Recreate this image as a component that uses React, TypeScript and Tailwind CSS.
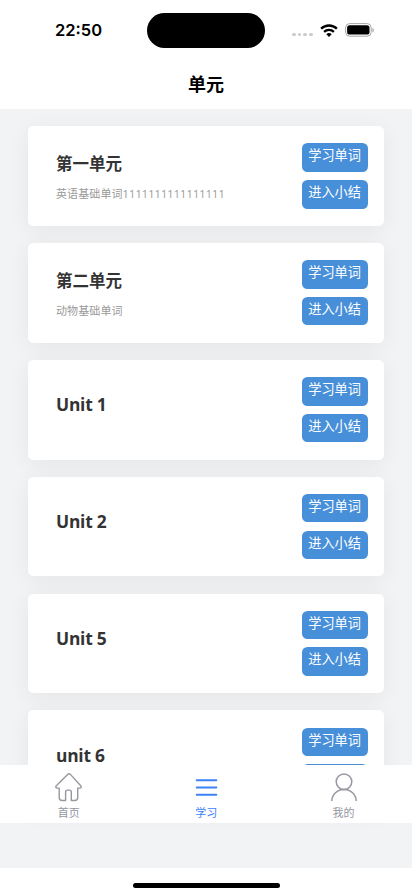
import clsx from "clsx";

type Unit = {
  title: string;
  desc?: string;
};

const units: Unit[] = [
  { title: "第一单元", desc: "英语基础单词1111111111111111" },
  { title: "第二单元", desc: "动物基础单词" },
  { title: "Unit 1" },
  { title: "Unit 2" },
  { title: "Unit 5" },
  { title: "unit 6" },
];

function StatusBar() {
  return (
    <div className="flex h-[60px] items-center">
      <div className="w-[147px] pl-[55px] font-['Inter','Liberation_Sans',sans-serif] text-[16.5px] font-semibold leading-5">
        22:50
      </div>
      <div className="mt-[1px] h-[35px] w-[118px] rounded-full bg-black" />
      <div className="ml-[27px] flex items-center">
        <div className="mt-[9px] flex gap-[2px]">
          {[0, 1, 2, 3].map((i) => (
            <span key={i} className="size-[3.7px] rounded-full bg-[#cbcbcb]" />
          ))}
        </div>
        <svg className="ml-[7px] h-[13px] w-[18px]" viewBox="0 0 18 13">
          <path
            d="M1.1 4.7a11.4 11.4 0 0 1 15.8 0M4.1 7.8a7.1 7.1 0 0 1 9.8 0"
            fill="none"
            stroke="#000"
            strokeWidth="2.3"
          />
          <path d="M9 12.9 6.3 10.2a3.9 3.9 0 0 1 5.4 0Z" />
        </svg>
        <svg className="ml-[7px] h-[14px] w-[30px]" viewBox="0 0 30 14">
          <rect x="0.6" y="0.6" width="25.6" height="12.6" rx="4" fill="none" stroke="#a6a6a6" />
          <rect x="2.1" y="2.2" width="22.4" height="9.4" rx="2.6" />
          <path d="M27.4 4.9v4.4c1.9-.7 1.9-3.7 0-4.4Z" fill="#a6a6a6" />
        </svg>
      </div>
    </div>
  );
}

function ActionButton({ label }: { label: string }) {
  return (
    <button
      type="button"
      className="flex h-[28.6px] w-[66px] justify-center rounded-[5.5px] bg-[#478fd9] text-[13.2px] leading-[25px] whitespace-nowrap text-white"
    >
      {label}
    </button>
  );
}

function UnitCard({ unit }: { unit: Unit }) {
  return (
    <li className="flex h-[99.7px] shrink-0 justify-between rounded-[5.5px] bg-white pr-[16.4px] pl-[28px] shadow-[0_4px_22px_rgba(0,0,0,0.06)]">
      <div className={unit.desc ? "pt-[26px]" : "pt-[32.6px]"}>
        <h2
          className={clsx(
            "font-bold leading-[24px] text-[#333]",
            unit.desc ? "text-[16.5px]" : "text-[17.4px] tracking-[-0.25px]"
          )}
        >
          {unit.title}
        </h2>
        {unit.desc && (
          <p className="mt-[9px] text-[11px] leading-[18px] tracking-[0.1px] text-[#999]">
            {unit.desc}
          </p>
        )}
      </div>
      <div className="flex flex-col gap-[8.2px] pt-[17.1px]">
        <ActionButton label="学习单词" />
        <ActionButton label="进入小结" />
      </div>
    </li>
  );
}

function HomeIcon() {
  return (
    <svg className="h-[29px] w-[28px]" viewBox="0 0 28 29" fill="none" stroke="currentColor" strokeWidth="1.4">
      <path
        d="M12.6 1.4 1.3 12.8c-1 1.1-.3 2.3 1 2.3h1.9v9.3c0 2 1 3.1 3 3.1h3.4V19c0-1.3.6-1.9 1.9-1.9h1.9c1.3 0 1.9.6 1.9 1.9v8.5h3.4c2 0 3-1.1 3-3.1v-9.3h2c1.3 0 2-1.2 1-2.3L15.4 1.4c-.9-.8-1.9-.8-2.8 0Z"
        strokeLinejoin="round"
      />
    </svg>
  );
}

function ListIcon() {
  return (
    <svg className="h-[29px] w-[28px]" viewBox="0 0 28 29" fill="none" stroke="currentColor" strokeWidth="2">
      <path d="M4.7 7.2h19.6M4.7 14.5h19.6M4.7 21.8h19.6" strokeLinecap="round" />
    </svg>
  );
}

function UserIcon() {
  return (
    <svg className="h-[29px] w-[28px]" viewBox="0 0 28 29" fill="none" stroke="currentColor" strokeWidth="1.5">
      <circle cx="14" cy="8.8" r="7.8" />
      <path d="M1.7 28c.5-6.8 5.5-11.4 12.3-11.4S25.8 21.2 26.3 28" />
    </svg>
  );
}

const tabs = [
  { label: "首页", Icon: HomeIcon },
  { label: "学习", Icon: ListIcon, active: true },
  { label: "我的", Icon: UserIcon },
];

function TabBar() {
  return (
    <nav className="absolute inset-x-0 bottom-[44.5px] grid h-[58px] grid-cols-3 bg-white">
      {tabs.map(({ label, Icon, active }) => (
        <button
          key={label}
          type="button"
          className={clsx(
            "flex flex-col items-center pt-[8px] pl-[0.4px]",
            active ? "text-[#3c82f8]" : "text-[#96979f]"
          )}
        >
          <Icon />
          <span className="mt-[3px] text-[11px] leading-4">{label}</span>
        </button>
      ))}
    </nav>
  );
}

export default function App() {
  return (
    <div className="flex h-[896px] w-[412px] flex-col overflow-hidden bg-white font-['Open_Sans','Noto_Sans_CJK_SC',sans-serif]">
      <header className="h-[109px] shrink-0 text-black">
        <StatusBar />
        <h1 className="mt-[11px] text-center text-[18px] font-bold leading-[26px]">单元</h1>
      </header>

      <main className="relative h-[758.5px] shrink-0 overflow-hidden bg-[#f2f3f5]">
        <ul className="flex flex-col gap-[17.2px] px-[28px] pt-[17.1px]">
          {units.map((unit) => (
            <UnitCard key={unit.title} unit={unit} />
          ))}
        </ul>
        <TabBar />
      </main>

      <div className="flex flex-1 justify-center pt-[15.5px]">
        <div className="h-[5px] w-[147px] rounded-full bg-black" />
      </div>
    </div>
  );
}
